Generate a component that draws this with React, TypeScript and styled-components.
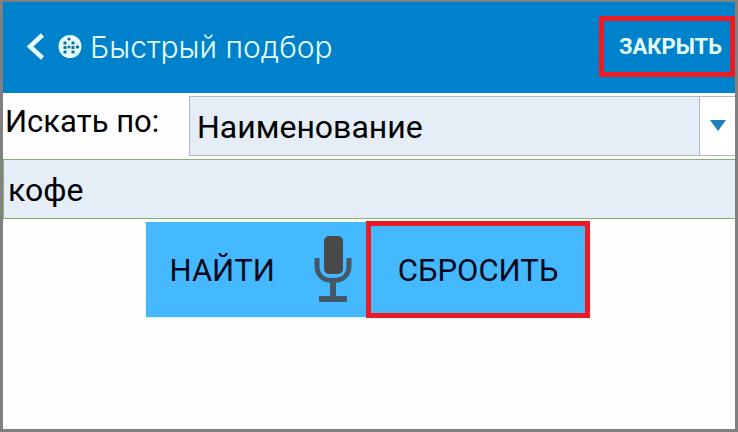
import React, { useState } from "react";
import styled, { createGlobalStyle } from "styled-components";

const GlobalStyle = createGlobalStyle`
  *, *::before, *::after { box-sizing: border-box; }
  body { margin: 0; background: #fff; font-family: Roboto, sans-serif; color: #000; }
  button, input, select { font: inherit; color: inherit; margin: 0; border-radius: 0; }
`;

const Screen = styled.div`
  min-height: 100vh;
  border: 3px solid #808080;
  border-top-width: 2px;
  background: #fefefe;
`;

const Header = styled.header`
  display: flex;
  align-items: center;
  height: 91px;
  padding: 0 0 2px 20px;
  background: #0081cc;
  color: #e6feff;
`;

const BackButton = styled.button`
  display: flex;
  padding: 0;
  border: 0;
  background: none;
  cursor: pointer;
`;

const Logo = styled.svg`
  margin: 0 8px 0 9px;
`;

const Title = styled.h1`
  flex: 1;
  margin: 0;
  font-family: Inter, sans-serif;
  font-size: 30px;
  font-weight: 300;
  line-height: 40px;
  white-space: nowrap;
`;

const CloseButton = styled.button`
  height: 61px;
  padding: 0 8px 0 15px;
  border: 5px solid #ed1c24;
  background: transparent;
  font-size: 22px;
  font-weight: 700;
  cursor: pointer;
`;

const Form = styled.form`
  display: flex;
  flex-direction: column;
  gap: 3px;
  padding-top: 3px;
  font-size: 32px;
`;

const Row = styled.div`
  display: flex;
`;

const Label = styled.label`
  width: 186px;
  padding-left: 2px;
  font-size: 31px;
  line-height: 52px;
  white-space: nowrap;
`;

const SelectBox = styled.div`
  display: grid;
  flex: 1;
  height: 60px;
`;

const Select = styled.select`
  grid-area: 1 / 1;
  width: 100%;
  padding: 2px 44px 0 7px;
  border: 1px solid #b4b6ba;
  border-right: 0;
  background: #e5edf7;
  appearance: none;
  outline: none;
`;

const SelectArrow = styled.span`
  grid-area: 1 / 1;
  justify-self: end;
  display: flex;
  align-items: center;
  justify-content: center;
  width: 36px;
  padding-bottom: 2px;
  border: 1px solid #b4b6ba;
  border-right: 0;
  background: #fff;
  pointer-events: none;
`;

const SearchInput = styled.input`
  width: 100%;
  height: 60px;
  padding: 2px 4px 0;
  border: 1px solid #86b26e;
  border-right: 0;
  background: #e5edf7;
  outline: none;
`;

const Actions = styled.div`
  display: flex;
  align-items: center;
  justify-content: center;
  margin-top: -1px;
  padding-right: 2px;
  font-size: 31px;
`;

const FindGroup = styled.div`
  display: flex;
  height: 95px;
  background: #45b9ff;
  box-shadow: 0 1px 3px #d5ecfb;
`;

const ActionButton = styled.button<{ $marked?: boolean }>`
  height: ${(p) => (p.$marked ? 97 : 95)}px;
  padding: ${(p) => (p.$marked ? "2px 27px 0" : "2px 24px 0")};
  border: ${(p) => (p.$marked ? "5px solid #ed1c24" : "0")};
  background: #45b9ff;
  color: #00091c;
  cursor: pointer;
`;

const MicButton = styled.button`
  display: flex;
  align-items: center;
  padding: 0 14px 2px 15px;
  border: 0;
  background: none;
  cursor: pointer;
`;

export default function App() {
  const [query, setQuery] = useState("кофе");

  return (
    <>
      <GlobalStyle />
      <Screen>
        <Header>
          <BackButton type="button" aria-label="Назад">
            <svg width="26" height="32" viewBox="0 0 26 32" fill="none">
              <path d="M19.500 4L7 15.500L19.500 27" stroke="#e6feff" strokeWidth="4.500" />
            </svg>
          </BackButton>
          <Logo width="24" height="24" viewBox="0 0 24 24" aria-hidden="true">
            <circle cx="12" cy="11.500" r="11.500" fill="#e6feff" />
            <g fill="#0a6ea8">
              <circle cx="11" cy="4" r="1.600" />
              <rect x="5.500" y="6.500" width="3" height="3" />
              <rect x="13.500" y="6.500" width="3" height="3" />
              <rect x="5.500" y="11" width="3" height="3" />
              <circle cx="11" cy="12" r="1.500" />
              <rect x="13.500" y="11" width="3" height="3" />
              <circle cx="19.500" cy="12" r="1.700" />
              <rect x="5.500" y="15.500" width="3" height="3" />
              <rect x="13.500" y="15.500" width="3" height="3" />
            </g>
          </Logo>
          <Title>Быстрый подбор</Title>
          <CloseButton type="button">ЗАКРЫТЬ</CloseButton>
        </Header>
        <Form onSubmit={(e) => e.preventDefault()}>
          <Row>
            <Label htmlFor="field">Искать по:</Label>
            <SelectBox>
              <Select id="field" defaultValue="name">
                <option value="name">Наименование</option>
              </Select>
              <SelectArrow>
                <svg width="16" height="11" viewBox="0 0 16 11">
                  <path d="M0 0H16L8 11Z" fill="#1a7fbd" />
                </svg>
              </SelectArrow>
            </SelectBox>
          </Row>
          <SearchInput
            type="text"
            aria-label="Строка поиска"
            value={query}
            onChange={(e) => setQuery(e.target.value)}
          />
          <Actions>
            <FindGroup>
              <ActionButton type="submit">НАЙТИ</ActionButton>
              <MicButton type="button" aria-label="Голосовой ввод">
                <svg width="38" height="66" viewBox="0 0 38 66">
                  <rect x="10" y="0" width="19" height="38" rx="5" fill="#4a4a4a" />
                  <path
                    d="M3 22V30C3 39 9 44.500 19 44.500S35 39 35 30V22"
                    fill="none"
                    stroke="#465867"
                    strokeWidth="5"
                  />
                  <path d="M16 45H22V60H33V66H5V60H16Z" fill="#465867" />
                </svg>
              </MicButton>
            </FindGroup>
            <ActionButton type="button" $marked onClick={() => setQuery("")}>
              СБРОСИТЬ
            </ActionButton>
          </Actions>
        </Form>
      </Screen>
    </>
  );
}
